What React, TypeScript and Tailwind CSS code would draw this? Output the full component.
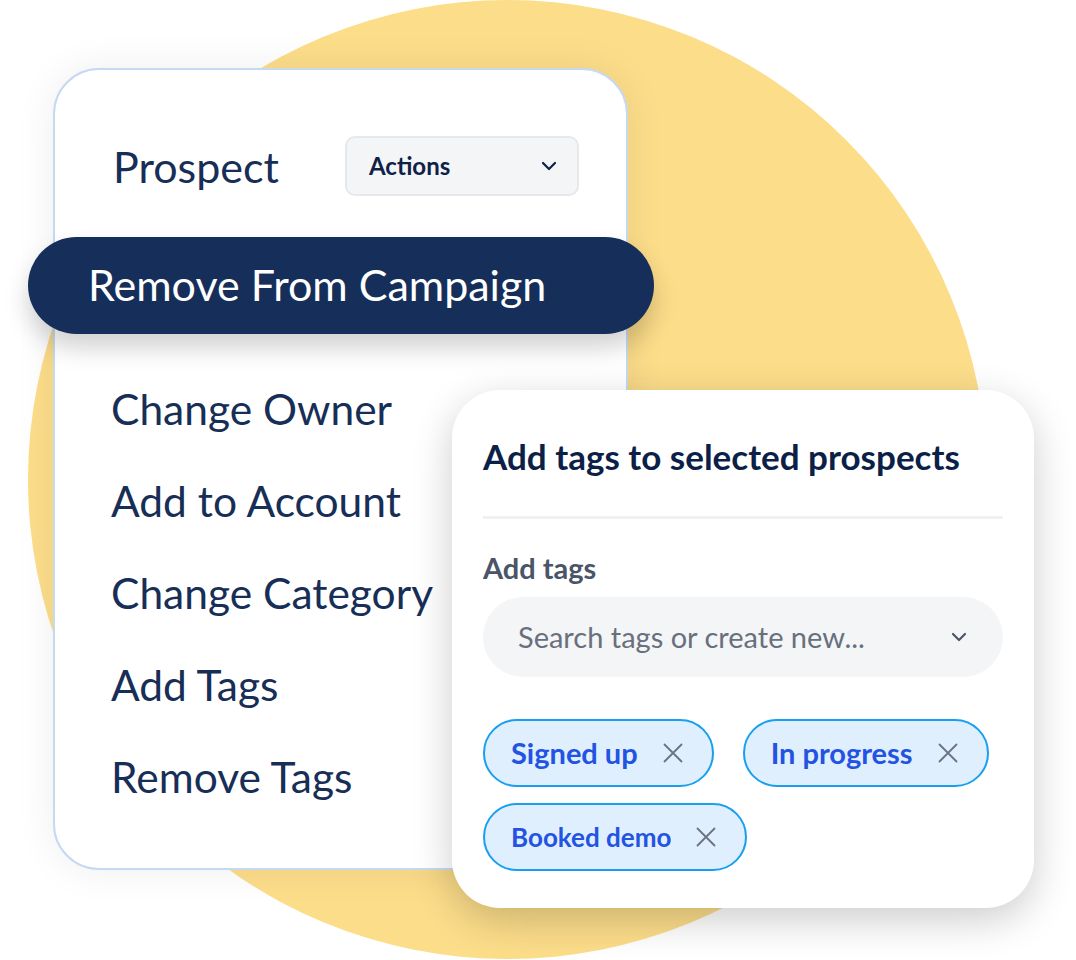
import React from "react";

const font = { fontFamily: "Lato, 'Noto Sans', sans-serif" };

const menuItems = ["Change Owner", "Add to Account", "Change Category", "Add Tags", "Remove Tags"];
const tags = [
	{ label: "Signed up", small: false },
	{ label: "In progress", small: false },
	{ label: "Booked demo", small: true },
];

const Chevron = ({ className }: { className?: string }) => (
	<svg viewBox="0 0 16 10" className={className} fill="none" stroke="currentColor" strokeWidth={2.2} strokeLinecap="round" strokeLinejoin="round">
		<path d="M2 2l6 6 6-6" />
	</svg>
);

const Cross = () => (
	<svg viewBox="0 0 20 20" className="h-5 w-5 shrink-0 text-[#6b7280]" fill="none" stroke="currentColor" strokeWidth={1.8} strokeLinecap="round">
		<path d="M1.5 1.5l17 17M18.5 1.5l-17 17" />
	</svg>
);

const Tag = ({ label, small }: { label: string; small: boolean }) => (
	<div className="flex h-[68px] items-center gap-[25px] rounded-full border-2 border-[#199ff0] bg-[#e0effe] pl-[26px] pr-[29px]">
		<span className={small ? "text-[26px] font-bold text-[#2353e2]" : "text-[29px] font-bold text-[#2353e2]"}>{label}</span>
		<Cross />
	</div>
);

export default function App() {
	return (
		<div className="relative h-[960px] w-[1076px] overflow-hidden bg-white" style={font}>
			{/* backdrop circle */}
			<div className="absolute left-[28px] top-0 h-[959px] w-[959px] rounded-full bg-[#fcdd8a]" />

			{/* actions menu card */}
			<div className="relative ml-[53px] pt-[68px]">
				<div className="flex h-[802px] w-[575px] flex-col rounded-[46px] border-2 border-[#c6d9f3] bg-white pt-[66px] shadow-[0_0_40px_rgba(0,0,0,0.07)]">
					<div className="flex items-center justify-between pl-[58px] pr-[47px]">
						<span className="text-[43px] leading-none text-[#172e57]">Prospect</span>
						<div className="flex h-[60px] w-[234px] items-center justify-between rounded-[10px] border-2 border-[#e6e8ec] bg-[#f4f5f7] pl-[22px] pr-[20px]">
							<span className="text-[24px] font-bold text-[#0f2147]">Actions</span>
							<Chevron className="h-[10px] w-[16px] text-[#0f2147]" />
						</div>
					</div>

					<div className="-ml-[27px] -mr-[28px] mt-[41px] flex h-[97px] items-center rounded-full bg-[#162f5a] pl-[60px] shadow-[0_14px_24px_rgba(0,0,0,0.18)]">
						<span className="text-[43px] text-white">Remove From Campaign</span>
					</div>

					<ul className="mt-[29px] flex flex-col pl-[56px]">
						{menuItems.map((item) => (
							<li key={item} className="flex h-[92px] items-center text-[42.5px] text-[#172e57]">
								{item}
							</li>
						))}
					</ul>
				</div>
			</div>

			{/* tag picker card */}
			<div className="absolute left-[452px] top-[390px] flex h-[518px] w-[582px] flex-col rounded-[48px] bg-white px-[31px] pt-[46px] shadow-[0_12px_40px_rgba(0,0,0,0.2)]">
				<h2 className="h-[40px] text-[35px] font-bold leading-[40px] text-[#0c1f47]">Add tags to selected prospects</h2>
				<div className="mt-[40px] h-[3px] bg-[#f4eff1]" />
				<div className="mt-[33px] text-[29px] font-bold leading-[32px] text-[#4a5568]">Add tags</div>
				<div className="mt-[13px] flex h-[80px] items-center justify-between rounded-full bg-[#f4f5f7] pl-[35px] pr-[36px]">
					<span className="text-[29px] text-[#68707d]">Search tags or create new...</span>
					<Chevron className="h-[10px] w-[16px] text-[#4a5568]" />
				</div>
				<div className="mt-[42px] flex flex-wrap gap-x-[29px] gap-y-[16px]">
					{tags.map((t) => (
						<Tag key={t.label} label={t.label} small={t.small} />
					))}
				</div>
			</div>
		</div>
	);
}
